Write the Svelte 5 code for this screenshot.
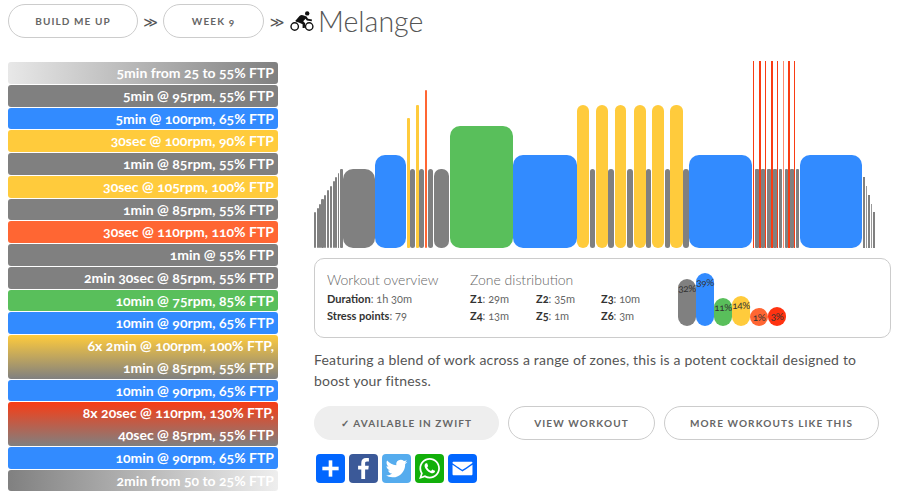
<script>
  const C = { g: '#808080', b: '#328bff', y: '#ffcb3c', gr: '#59bf5b', o: '#ff6633', r: '#f93c14' };
  const steps = [
    ['linear-gradient(90deg,#e8e8e8,#808080)', ['5min from 25 to 55% FTP']],
    [C.g, ['5min @ 95rpm, 55% FTP']],
    [C.b, ['5min @ 100rpm, 65% FTP']],
    [C.y, ['30sec @ 100rpm, 90% FTP']],
    [C.g, ['1min @ 85rpm, 55% FTP']],
    [C.y, ['30sec @ 105rpm, 100% FTP']],
    [C.g, ['1min @ 85rpm, 55% FTP']],
    [C.o, ['30sec @ 110rpm, 110% FTP']],
    [C.g, ['1min @ 55% FTP']],
    [C.g, ['2min 30sec @ 85rpm, 55% FTP']],
    [C.gr, ['10min @ 75rpm, 85% FTP']],
    [C.b, ['10min @ 90rpm, 65% FTP']],
    ['linear-gradient(180deg,#ffcb3c,#808080)', ['6x 2min @ 100rpm, 100% FTP,', '1min @ 85rpm, 55% FTP']],
    [C.b, ['10min @ 90rpm, 65% FTP']],
    ['linear-gradient(180deg,#f93c14,#808080)', ['8x 20sec @ 110rpm, 130% FTP,', '40sec @ 85rpm, 55% FTP']],
    [C.b, ['10min @ 90rpm, 65% FTP']],
    ['linear-gradient(90deg,#808080,#eeeeee)', ['2min from 50 to 25% FTP']]
  ];

  // start x, end x, height, colour, radius — measured against the 900px page
  const raw = [
    [314.5,316.5,36,C.g,1],[317,319,40,C.g,1],[319,321,44,C.g,1],[321,324,49,C.g,1],[324,326,53,C.g,1],
    [327,329,58,C.g,1],[330,332,62,C.g,1],[333,335,67,C.g,1],[335,337,71,C.g,1],[338,339,75,C.g,1],[340,343,79,C.g,1],
    [343,375,79,C.g,10],[375,406,93.5,C.b,10],
    [407,410,130,C.y,1],[410,415,79,C.g,3],[416,419,143,C.y,1],[419,424,79,C.g,3],[425,427,158,C.o,1],[428,433,79,C.g,3],
    [434,449,79,C.g,7],[450,513,122.5,C.gr,10],[513,577,93.5,C.b,10],
    [577,589,143,C.y,6],[590,595,79,C.g,3],[596,608,143,C.y,6],[608,614,79,C.g,3],[615,626,143,C.y,6],[627,633,79,C.g,3],
    [634,646,143,C.y,6],[646,651,79,C.g,3],[652,664,143,C.y,6],[665,670,79,C.g,3],[670,683,143,C.y,6],[683,689,79,C.g,3],
    [689,752,93.5,C.b,10],
    [753,754,187,C.r,0],[755,759,79,C.g,1],[759,761,187,C.r,0],[761,765,79,C.g,1],[765,766,187,C.r,0],[767,771,79,C.g,1],
    [771,773,187,C.r,0],[773,777,79,C.g,1],[777,778,187,C.r,0],[779,782,79,C.g,1],[783,784,187,'#ff8a70',0],[785,788,79,C.g,1],
    [788,790,187,C.r,0],[790,794,79,C.g,1],[794,795,187,C.r,0],[796,799,79,C.g,1],
    [800,862,93.5,C.b,10],
    [863,865,71.5,C.g,0],[866,867,62.5,'#999',0],[868,870,53,C.g,0],[871,872,44,'#999',0],[873,875,36,C.g,0]
  ];
  const bars = raw.map((b, i) => ({
    gap: i ? b[0] - raw[i - 1][1] : 0,
    w: b[1] - b[0], h: b[2], c: b[3], r: b[4]
  }));

  const zones = [
    ['Z1', '29m'], ['Z2', '35m'], ['Z3', '10m'],
    ['Z4', '13m'], ['Z5', '1m'], ['Z6', '3m']
  ];
  const dist = [
    ['32%', 47, C.g], ['39%', 53, C.b], ['11%', 28, C.gr],
    ['14%', 30, C.y], ['1%', 18, C.o], ['3%', 19, '#ff3311']
  ];
</script>

<div class="page">
  <header class="crumbs">
    <a class="pill crumb-a">BUILD ME UP</a>
    <span class="sep">≫</span>
    <a class="pill crumb-b">WEEK 9</a>
    <span class="sep">≫</span>
    <svg class="bike" viewBox="0 0 24 20" aria-hidden="true">
      <circle cx="4.7" cy="15.5" r="3.7" fill="none" stroke="#111" stroke-width="1.4" />
      <circle cx="19.2" cy="15.5" r="3.7" fill="none" stroke="#111" stroke-width="1.4" />
      <circle cx="17.2" cy="2.4" r="2.2" fill="#111" />
      <path d="M5.2 10 L9.5 5 Q11 3.6 13 4.2 L16.6 5.4 L18 7.8 L22 8.6 L21.7 10.2 L16.8 9.4 L15.6 7.8 L13.2 10.2 L15.2 12.2 L14.8 17 L12.6 17 L12.6 13.2 L8.8 11.4 L6.8 11 Z" fill="#111" />
    </svg>
    <h1>Melange</h1>
  </header>

  <div class="cols">
    <ul class="steps">
      {#each steps as [bg, lines]}
        <li style="background:{bg}">
          {#each lines as line}<span>{line}</span>{/each}
        </li>
      {/each}
    </ul>

    <main class="detail">
      <div class="chart">
        {#each bars as b}
          <i style="margin-left:{b.gap}px;width:{b.w}px;height:{b.h}px;background:{b.c};border-radius:{b.r}px"></i>
        {/each}
      </div>

      <section class="overview">
        <div class="ov-col">
          <h2>Workout overview</h2>
          <p><b>Duration</b>: 1h 30m</p>
          <p><b>Stress points</b>: 79</p>
        </div>
        <div class="zone-col">
          <h2>Zone distribution</h2>
          <div class="zones">
            {#each zones as [z, t]}
              <p><b>{z}</b>: {t}</p>
            {/each}
          </div>
        </div>
        <div class="dist">
          {#each dist as [p, h, c]}
            <span style="height:{h}px;background:{c}">{p}</span>
          {/each}
        </div>
      </section>

      <p class="blurb">Featuring a blend of work across a range of zones, this is a potent cocktail designed to boost your fitness.</p>

      <div class="actions">
        <a class="pill act act-zwift">✓ AVAILABLE IN ZWIFT</a>
        <a class="pill act act-view">VIEW WORKOUT</a>
        <a class="pill act act-more">MORE WORKOUTS LIKE THIS</a>
      </div>

      <div class="share">
        <a style="background:#0166ff"><svg viewBox="0 0 32 32"><path fill="#fff" d="M14 7h4v18h-4z" /><path fill="#fff" d="M7 14h18v4H7z" /></svg></a>
        <a style="background:#3b5998"><svg viewBox="0 0 32 32"><path fill="#fff" d="M17.78 27.5V17.008h3.522l.527-4.09h-4.05v-2.61c0-1.182.33-1.99 2.023-1.99h2.166V4.66c-.375-.05-1.66-.16-3.155-.16-3.123 0-5.26 1.905-5.26 5.405v3.016h-3.53v4.09h3.53V27.5h4.223z" /></svg></a>
        <a style="background:#55acee"><svg viewBox="0 0 32 32"><path fill="#fff" d="M28 8.557a10 10 0 0 1-2.828.775 4.93 4.93 0 0 0 2.166-2.725 9.7 9.7 0 0 1-3.13 1.194 4.92 4.92 0 0 0-3.593-1.55 4.924 4.924 0 0 0-4.794 6.049c-4.09-.21-7.72-2.17-10.15-5.15a4.94 4.94 0 0 0-.665 2.477c0 1.71.87 3.214 2.19 4.1a5 5 0 0 1-2.23-.616v.06c0 2.39 1.7 4.38 3.952 4.83-.414.115-.85.174-1.297.174q-.476-.001-.928-.086a4.935 4.935 0 0 0 4.6 3.42 9.9 9.9 0 0 1-6.114 2.107q-.597 0-1.175-.068a13.95 13.95 0 0 0 7.55 2.213c9.056 0 14.01-7.507 14.01-14.013q0-.32-.015-.637c.96-.695 1.795-1.56 2.455-2.55z" /></svg></a>
        <a style="background:#12af0a"><svg viewBox="0 0 32 32"><path fill="#fff" fill-rule="evenodd" d="M16.21 4.41C9.973 4.41 4.917 9.465 4.917 15.7c0 2.134.592 4.13 1.62 5.832L4.5 27.59l6.25-2.002a11.24 11.24 0 0 0 5.46 1.404c6.234 0 11.29-5.055 11.29-11.29 0-6.237-5.056-11.292-11.29-11.292m0 20.69c-1.91 0-3.69-.57-5.173-1.553l-3.61 1.156 1.173-3.49a9.35 9.35 0 0 1-1.79-5.512c0-5.18 4.217-9.4 9.4-9.4s9.397 4.22 9.397 9.4c0 5.188-4.214 9.4-9.398 9.4zm5.293-6.832c-.284-.155-1.673-.906-1.934-1.012-.265-.106-.455-.16-.658.12s-.78.91-.954 1.096c-.176.186-.345.203-.628.048-.282-.154-1.2-.494-2.264-1.517-.83-.795-1.373-1.76-1.53-2.055s0-.445.15-.584c.134-.124.3-.326.45-.488.15-.163.203-.28.306-.47.104-.19.06-.36-.005-.506-.066-.147-.59-1.587-.81-2.173-.218-.586-.46-.498-.63-.505-.168-.007-.358-.038-.55-.045-.19-.007-.51.054-.78.332-.277.274-1.05.943-1.1 2.362-.055 1.418.926 2.826 1.064 3.023.137.2 1.874 3.272 4.76 4.537 2.888 1.264 2.9.878 3.43.85.53-.027 1.734-.633 2-1.297.266-.664.287-1.24.22-1.363-.07-.123-.26-.203-.54-.357z" /></svg></a>
        <a style="background:#0166ff"><svg viewBox="0 0 32 32"><path fill="#fff" d="M27 21.775v-9.9s-10.01 6.985-10.982 7.348C15.058 18.878 5 11.875 5 11.875v9.9c0 1.375.293 1.65 1.65 1.65h18.7c1.393 0 1.65-.242 1.65-1.65m-.017-11.841c0-1.002-.291-1.359-1.633-1.359H6.65c-1.38 0-1.65.429-1.65 1.43l.016.154s9.939 6.842 11 7.216C17.14 16.941 26.983 10.005 26.983 10.005z" /></svg></a>
      </div>
    </main>
  </div>
</div>

<style>
  :global(body) {
    margin: 0;
    background: #fff;
    font-family: Lato, "Open Sans", sans-serif;
    font-variant-numeric: oldstyle-nums;
    color: #555;
  }
  .page {
    width: 900px;
    height: 499px;
    overflow: hidden;
    box-sizing: border-box;
    padding: 4px 0 0 8px;
  }
  .crumbs {
    display: flex;
    align-items: center;
    height: 34px;
  }
  .pill {
    display: flex;
    align-items: center;
    justify-content: center;
    box-sizing: border-box;
    border: 1px solid #ccc;
    border-radius: 17px;
    font-size: 10px;
    font-weight: 700;
    letter-spacing: 1.1px;
    color: #666;
    background: #fff;
  }
  .crumb-a { width: 130px; height: 34px; }
  .crumb-b { width: 101px; height: 34px; }
  .sep {
    width: 25px;
    text-align: center;
    font-family: "DejaVu Sans", sans-serif;
    font-size: 14px;
    color: #555;
    line-height: 34px;
    padding-top: 2px;
  }
  .crumb-b + .sep { width: 26px; }
  .bike {
    width: 24px;
    height: 20px;
  }
  h1 {
    margin: 0 0 0 4px;
    font-size: 28.5px;
    font-weight: 300;
    color: #555;
    line-height: 34px;
  }
  .cols {
    display: flex;
    margin-top: 24px;
  }
  .steps {
    list-style: none;
    margin: 0;
    padding: 0;
    width: 270px;
    flex: none;
    display: flex;
    flex-direction: column;
    gap: 1px;
  }
  .steps li {
    border-radius: 3px;
    padding: 0 4px 0 0;
    text-align: right;
    color: #fff;
    font-size: 14px;
    font-weight: 700;
    line-height: 21.75px;
  }
  .steps span { display: block; }
  .detail {
    margin-left: 36px;
    width: 577px;
    flex: none;
  }
  .chart {
    display: flex;
    align-items: flex-end;
    height: 186px;
  }
  .chart i { flex: none; display: block; }
  .overview {
    box-sizing: border-box;
    display: flex;
    height: 80px;
    margin-top: 10px;
    padding: 12px 12px 0;
    border: 1px solid #ccc;
    border-radius: 10px;
  }
  h2 {
    margin: 0 0 1px;
    font-size: 14px;
    font-weight: 300;
    line-height: 18px;
    color: #666;
  }
  .overview p {
    margin: 0;
    font-size: 11px;
    line-height: 17px;
    color: #666;
  }
  .overview b { color: #333; font-weight: 700; }
  .ov-col { width: 143px; flex: none; }
  .zone-col { width: 208px; flex: none; }
  .zones {
    display: grid;
    grid-template-columns: 66px 65px 1fr;
  }
  .dist {
    display: flex;
    align-items: flex-end;
    height: 53px;
    margin-top: 2px;
  }
  .dist span {
    box-sizing: border-box;
    width: 18px;
    padding-top: 2px;
    border-radius: 9px;
    font-size: 10px;
    line-height: 14px;
    text-align: center;
    color: #333;
    letter-spacing: -0.5px;
  }
  .blurb {
    margin: 11px 0 0;
    font-size: 14px;
    letter-spacing: 0.2px;
    line-height: 21px;
    color: #555;
  }
  .actions {
    display: flex;
    gap: 9px;
    margin-top: 15px;
  }
  .act { height: 34px; }
  .act-zwift { width: 185px; background: #eee; border-color: #eee; }
  .act-view { width: 147px; }
  .act-more { width: 215px; }
  .share {
    display: flex;
    gap: 4px;
    margin: 14px 0 0 2px;
  }
  .share a {
    display: block;
    width: 29px;
    height: 29px;
    border-radius: 4px;
  }
  .share svg { display: block; width: 29px; height: 29px; }
</style>
